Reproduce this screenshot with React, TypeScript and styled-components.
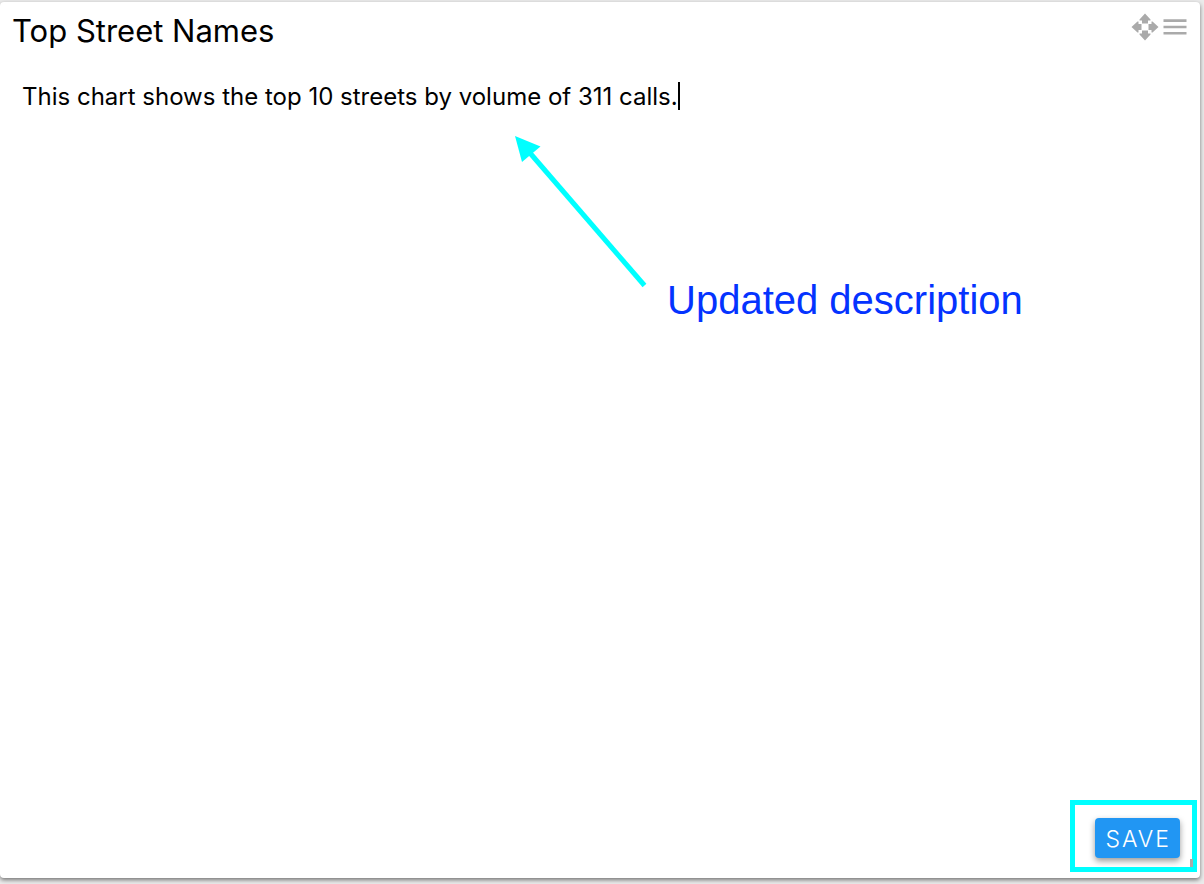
import { useState } from "react";
import styled, { createGlobalStyle } from "styled-components";

const GlobalStyle = createGlobalStyle`
  *, *::before, *::after { box-sizing: border-box; }
  body {
    margin: 0;
    background: #ebebeb;
    color: #000;
    font-family: Inter, "Liberation Sans", sans-serif;
  }
`;

const Page = styled.main`
  display: flex;
  min-height: 100vh;
  padding: 2px 4px 6px 0;
`;

const Card = styled.section`
  position: relative;
  display: flex;
  flex: 1;
  flex-direction: column;
  min-width: 0;
  background: #fff;
  border-radius: 4px;
  box-shadow: 0 2px 4px rgba(0, 0, 0, 0.5);
`;

const Header = styled.header`
  display: flex;
  align-items: flex-start;
  justify-content: space-between;
  padding: 8px 13px 0 12px;
`;

const Title = styled.h1`
  margin: 0;
  font-size: 31px;
  font-weight: 400;
  line-height: 42px;
`;

const Tools = styled.div`
  display: flex;
  gap: 4px;
  padding-top: 3px;
`;

const IconButton = styled.button`
  display: flex;
  padding: 0;
  border: 0;
  background: none;
  color: #aaa;
  cursor: pointer;
`;

const Editor = styled.form`
  display: flex;
  flex: 1;
  flex-direction: column;
  justify-content: space-between;
  padding: 30px 20px 20px 22px;
`;

const Field = styled.div`
  display: flex;
  align-items: flex-start;
`;

const Description = styled.textarea`
  field-sizing: content;
  max-width: 100%;
  padding: 0;
  border: 0;
  outline: 0;
  resize: none;
  overflow: hidden;
  background: none;
  color: inherit;
  font-family: inherit;
  font-size: 24px;
  line-height: 30px;
`;

const Caret = styled.span`
  width: 2px;
  height: 28px;
  background: #000;
`;

const Actions = styled.div`
  display: flex;
  justify-content: flex-end;
`;

const SaveWrap = styled.div`
  position: relative;
`;

const SaveButton = styled.button`
  display: block;
  height: 40px;
  padding: 2px 9px 0 10px;
  border: 0;
  border-radius: 4px;
  background: #2196f3;
  box-shadow: 0 3px 6px rgba(0, 0, 0, 0.4);
  color: #fff;
  font-family: inherit;
  font-size: 23px;
  font-weight: 300;
  line-height: 38px;
  letter-spacing: 2px;
  cursor: pointer;
`;

const Highlight = styled.div`
  position: absolute;
  inset: -18px -17px -14px -25px;
  border: 5px solid #0ff;
  pointer-events: none;
`;

const ResizeGrip = styled.span`
  position: absolute;
  right: 7px;
  bottom: 11px;
  width: 3px;
  height: 8px;
  background: #aaa;
`;

const Arrow = styled.svg`
  position: absolute;
  top: 132px;
  left: 512px;
  pointer-events: none;
`;

const Note = styled.p`
  position: absolute;
  top: 274px;
  left: 667px;
  margin: 0;
  color: #0433ff;
  font-family: "Liberation Sans", Arial, sans-serif;
  font-size: 40px;
  line-height: 48px;
  white-space: nowrap;
`;

const MoveIcon = () => (
  <svg width="28" height="28" viewBox="0 0 28 28" fill="currentColor" aria-hidden="true">
    <path d="M14 0.5 L19.5 6.5 V7.5 H17 V10.5 H11 V7.5 H8.5 V6.5 Z" />
    <path d="M14 27.5 L19.5 21.5 V20.5 H17 V17.5 H11 V20.5 H8.5 V21.5 Z" />
    <path d="M0.5 14 L6.5 8.5 H7.5 V11 H10.5 V17 H7.5 V19.5 H6.5 Z" />
    <path d="M27.5 14 L21.5 8.5 H20.5 V11 H17.5 V17 H20.5 V19.5 H21.5 Z" />
  </svg>
);

const MenuIcon = () => (
  <svg width="24" height="28" viewBox="0 0 24 28" fill="currentColor" aria-hidden="true">
    <path d="M0.5 6.3h23v2.6h-23zM0.5 12.7h23v2.6h-23zM0.5 19h23v2.6h-23z" />
  </svg>
);

export default function App() {
  const [text, setText] = useState("This chart shows the top 10 streets by volume of 311 calls.");

  return (
    <Page>
      <GlobalStyle />
      <Card>
        <Header>
          <Title>Top Street Names</Title>
          <Tools>
            <IconButton type="button" aria-label="Move">
              <MoveIcon />
            </IconButton>
            <IconButton type="button" aria-label="Menu">
              <MenuIcon />
            </IconButton>
          </Tools>
        </Header>
        <Editor onSubmit={(event) => event.preventDefault()}>
          <Field>
            <Description
              aria-label="Description"
              rows={1}
              spellCheck={false}
              value={text}
              onChange={(event) => setText(event.target.value)}
            />
            <Caret />
          </Field>
          <Actions>
            <SaveWrap>
              <SaveButton type="submit">SAVE</SaveButton>
              <Highlight />
            </SaveWrap>
          </Actions>
        </Editor>
        <ResizeGrip />
        <Arrow width="136" height="156" viewBox="0 0 136 156" aria-hidden="true">
          <path d="M18 19 L132.5 151.5" stroke="#0ff" strokeWidth="5" fill="none" />
          <path d="M3 2 L28.5 12.5 L10 28 Z" fill="#0ff" />
        </Arrow>
        <Note>Updated description</Note>
      </Card>
    </Page>
  );
}
